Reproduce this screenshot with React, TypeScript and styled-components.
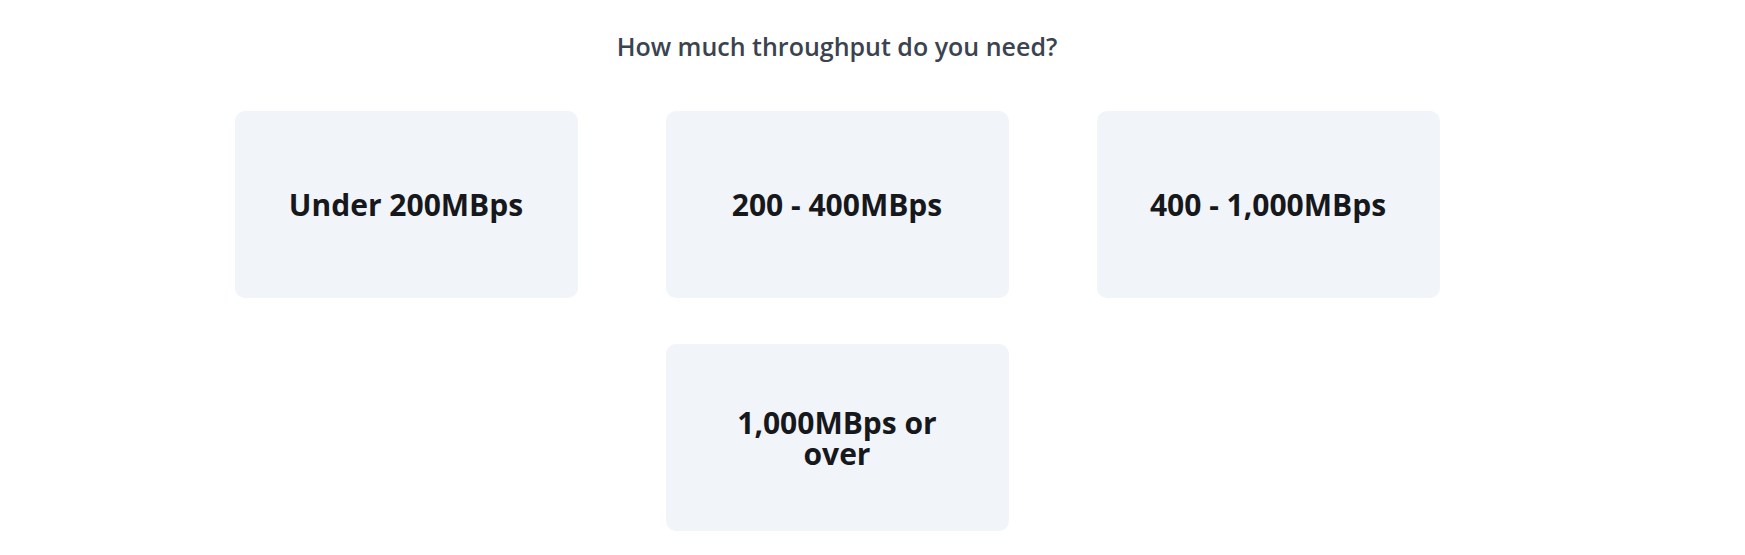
import React from "react";
import styled, { createGlobalStyle } from "styled-components";

const options = [
    { id: "under-200", label: "Under 200MBps" },
    { id: "200-400", label: "200 - 400MBps" },
    { id: "400-1000", label: "400 - 1,000MBps" },
    { id: "over-1000", label: "1,000MBps or over" },
];

export default function App() {
    return (
        <>
            <GlobalStyle />
            <Page>
                <Question>How much throughput do you need?</Question>
                <OptionGrid>
                    {options.map((option, i) => (
                        <OptionCard key={option.id} $col={i === 3 ? 2 : undefined}>
                            <OptionLabel>{option.label}</OptionLabel>
                        </OptionCard>
                    ))}
                </OptionGrid>
            </Page>
        </>
    );
}

const GlobalStyle = createGlobalStyle`
    body {
        margin: 0;
        background: #ffffff;
        font-family: "Open Sans", "Noto Sans", sans-serif;
    }
`;

const Page = styled.main`
    width: 1674px;
    padding-top: 30px;
    display: flex;
    flex-direction: column;
    align-items: center;
`;

const Question = styled.h2`
    margin: 0;
    font-size: 25px;
    line-height: 32px;
    font-weight: 600;
    color: #3b4350;
`;

const OptionGrid = styled.div`
    margin-top: 49px;
    display: grid;
    grid-template-columns: repeat(3, 343px);
    grid-auto-rows: 187px;
    column-gap: 88px;
    row-gap: 46px;
`;

const OptionCard = styled.button<{ $col?: number }>`
    grid-column: ${(p) => p.$col ?? "auto"};
    display: flex;
    align-items: center;
    justify-content: center;
    padding: 0 46px;
    border: none;
    border-radius: 10px;
    background-color: #f1f4f8;
    font-family: inherit;
    cursor: pointer;

    &:hover {
        background-color: #e7ecf2;
    }
`;

const OptionLabel = styled.span`
    font-size: 30px;
    line-height: 31px;
    font-weight: 700;
    color: #16181c;
    text-align: center;
`;
